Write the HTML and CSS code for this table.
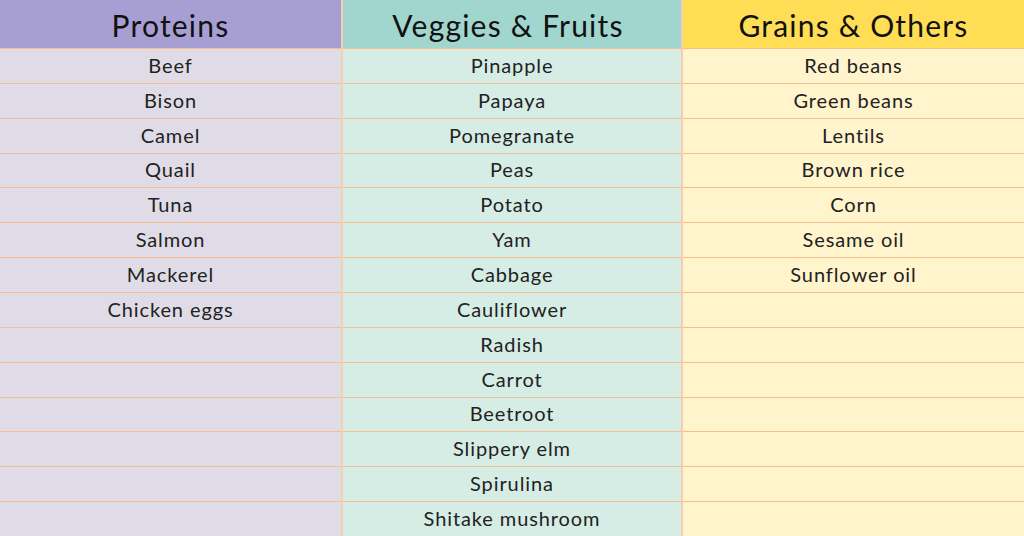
FILE: index.html
```html
<!DOCTYPE html>
<html>
<head>
<meta charset="utf-8">
<link rel="stylesheet" href="styles.css">
</head>
<body>
<div class="table">
  <div class="col proteins">
    <div class="head">Proteins</div>
    <div class="cell">Beef</div>
    <div class="cell">Bison</div>
    <div class="cell">Camel</div>
    <div class="cell">Quail</div>
    <div class="cell">Tuna</div>
    <div class="cell">Salmon</div>
    <div class="cell">Mackerel</div>
    <div class="cell">Chicken eggs</div>
    <div class="cell"></div>
    <div class="cell"></div>
    <div class="cell"></div>
    <div class="cell"></div>
    <div class="cell"></div>
    <div class="cell"></div>
  </div>
  <div class="col veggies">
    <div class="head">Veggies &amp; Fruits</div>
    <div class="cell">Pinapple</div>
    <div class="cell">Papaya</div>
    <div class="cell">Pomegranate</div>
    <div class="cell">Peas</div>
    <div class="cell">Potato</div>
    <div class="cell">Yam</div>
    <div class="cell">Cabbage</div>
    <div class="cell">Cauliflower</div>
    <div class="cell">Radish</div>
    <div class="cell">Carrot</div>
    <div class="cell">Beetroot</div>
    <div class="cell">Slippery elm</div>
    <div class="cell">Spirulina</div>
    <div class="cell">Shitake mushroom</div>
  </div>
  <div class="col grains">
    <div class="head">Grains &amp; Others</div>
    <div class="cell">Red beans</div>
    <div class="cell">Green beans</div>
    <div class="cell">Lentils</div>
    <div class="cell">Brown rice</div>
    <div class="cell">Corn</div>
    <div class="cell">Sesame oil</div>
    <div class="cell">Sunflower oil</div>
    <div class="cell"></div>
    <div class="cell"></div>
    <div class="cell"></div>
    <div class="cell"></div>
    <div class="cell"></div>
    <div class="cell"></div>
    <div class="cell"></div>
  </div>
</div>
</body>
</html>
```

FILE: styles.css
```css
html, body {
  margin: 0;
  padding: 0;
}
body {
  width: 1024px;
  height: 536px;
  overflow: hidden;
  font-family: "Lato", "Open Sans", sans-serif;
  color: #222222;
}
.table {
  display: grid;
  grid-template-columns: 341px 342px 341px;
  height: 536px;
}
.col {
  display: grid;
  grid-template-rows: 48px repeat(14, 1fr);
}
.veggies {
  border-left: 2px solid #f4cfb1;
  border-right: 2px solid #f4cfb1;
}
.head {
  display: flex;
  align-items: center;
  justify-content: center;
  font-size: 30px;
  letter-spacing: 1.2px;
  color: #111111;
  padding-top: 2px;
}
.veggies .head {
  padding-right: 8px;
}
.cell {
  display: flex;
  align-items: center;
  justify-content: center;
  font-size: 20px;
  letter-spacing: 0.9px;
  border-top: 1px solid #f6bd8f;
  padding-bottom: 2px;
}
.proteins .head { background: #a79fd4; }
.veggies .head { background: #a1d6cf; }
.grains .head { background: #ffdd55; }
.proteins .cell { background: #dfdce7; }
.veggies .cell { background: #d5ede5; }
.grains .cell { background: #fff4cc; }
```
